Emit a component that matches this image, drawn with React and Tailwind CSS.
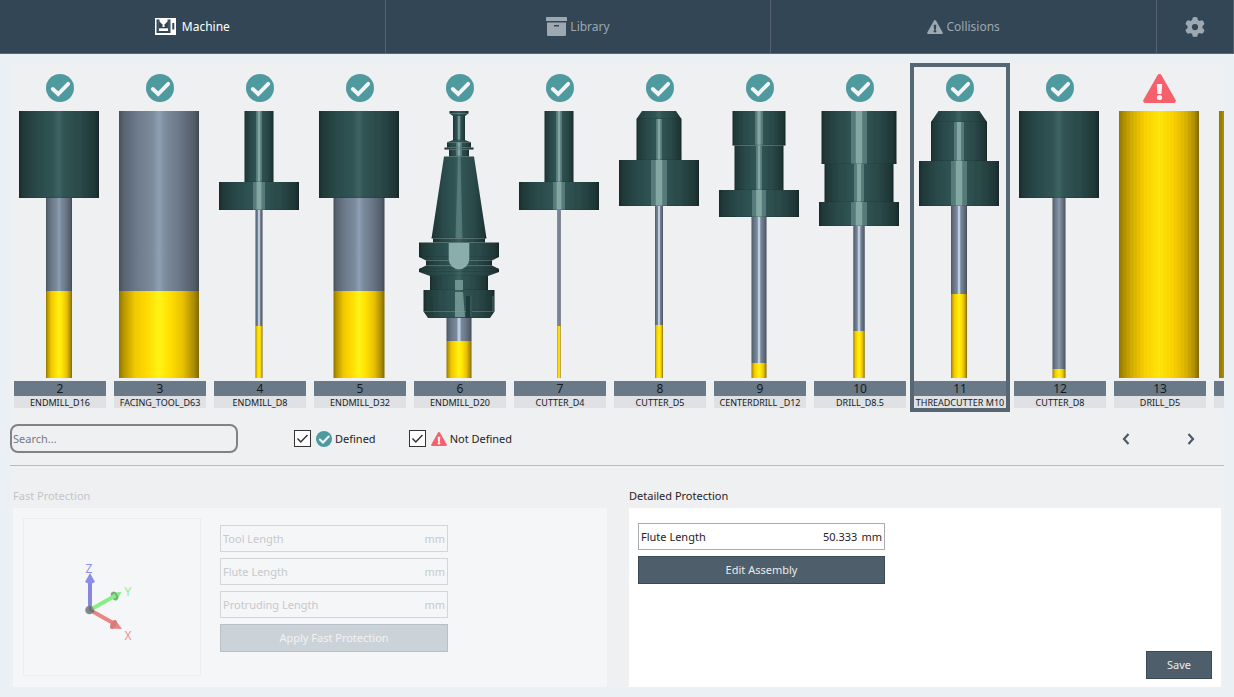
import { useState } from "react";
import { FaGear } from "react-icons/fa6";

const H = "holder";
const S = "shank";
const F = "flute";

const seg = (kind, top, bottom, y0, y1, shine) => ({ kind, top, bottom, y0, y1, shine });
const cyl = (kind, r, y0, y1, shine) => seg(kind, r, r, y0, y1, shine);

const TOOLS = [
  { id: 2, name: "ENDMILL_D16", parts: [cyl(H, 40, 0, 87), cyl(S, 13, 87, 180), cyl(F, 13, 180, 267)] },
  { id: 3, name: "FACING_TOOL_D63", parts: [cyl(S, 40, 0, 180), cyl(F, 40, 180, 267)] },
  { id: 4, name: "ENDMILL_D8", parts: [cyl(H, 14.5, 0, 71, 3), cyl(H, 40, 71, 99, 6), cyl(S, 3.5, 99, 215, 1), cyl(F, 3.5, 215, 267)] },
  { id: 5, name: "ENDMILL_D32", parts: [cyl(H, 40, 0, 87), cyl(S, 25.5, 87, 180), cyl(F, 25.5, 180, 267)] },
  {
    id: 6,
    name: "ENDMILL_D20",
    parts: [
      cyl(H, 9.5, 0, 2.5), seg(H, 9.5, 6, 2.5, 5), cyl(H, 6, 5, 29, 1.5), seg(H, 6, 12, 29, 31.5),
      cyl(H, 12, 31.5, 36.5, 3), cyl(H, 14.5, 36.5, 38.5, 3), cyl(H, 10, 38.5, 45.5, 3),
      seg(H, 15, 27.5, 45.5, 127.5), cyl(H, 26, 127.5, 131.5),
      cyl(H, 40, 131.5, 146), seg(H, 40, 33, 146, 149.5), cyl(H, 33, 149.5, 154.5),
      seg(H, 33, 40, 154.5, 158), cyl(H, 40, 158, 161), seg(H, 40, 29, 161, 165),
      cyl(H, 29, 165, 179), cyl(H, 35.5, 179, 200.5), seg(H, 35.5, 31, 200.5, 207),
      cyl(S, 12.5, 207, 230, 2), cyl(F, 12.5, 230, 267),
    ],
    collet: true,
  },
  { id: 7, name: "CUTTER_D4", parts: [cyl(H, 14.5, 0, 71, 3), cyl(H, 40, 71, 99, 6), cyl(S, 1.7, 99, 215), cyl(F, 1.7, 215, 267)] },
  { id: 8, name: "CUTTER_D5", parts: [seg(H, 17, 22.5, 0, 8), cyl(H, 22.5, 8, 49, 3), cyl(H, 40, 49, 95, 8), cyl(S, 4, 95, 214, 1), cyl(F, 4, 214, 267)] },
  { id: 9, name: "CENTERDRILL _D12", parts: [cyl(H, 26.5, 0, 34.5, 4), cyl(H, 24.5, 34.5, 79, 3), cyl(H, 40, 79, 106, 7), cyl(S, 7.5, 106, 252, 1.5), cyl(F, 7.5, 252, 267)] },
  { id: 10, name: "DRILL_D8.5", parts: [cyl(H, 37.5, 0, 53, 8), cyl(H, 34.5, 53, 91, 5), cyl(H, 40, 91, 115, 8), cyl(S, 5.7, 115, 220, 1.5), cyl(F, 5.7, 220, 267)] },
  { id: 11, name: "THREADCUTTER M10", parts: [seg(H, 20.5, 28, 0, 11), cyl(H, 28, 11, 50, 5), cyl(H, 40, 50, 95, 8), cyl(S, 8, 95, 183, 1.5), cyl(F, 8, 183, 267)] },
  { id: 12, name: "CUTTER_D8", parts: [cyl(H, 40, 0, 87), cyl(S, 6.5, 87, 258), cyl(F, 6.5, 258, 267)] },
  { id: 13, name: "DRILL_D5", parts: [cyl("solid", 40, 0, 267)], undefinedTool: true },
];

const STOPS = {
  holder: [[0, "#182a2a"], [4, "#203838"], [22, "#2a4a4a"], [42, "#305454"], [50, "#3e6462"], [56, "#305454"], [78, "#2a4848"], [96, "#1e3535"], [100, "#152525"]],
  shank: [[0, "#474f5a"], [6, "#596472"], [25, "#6f7d8d"], [42, "#7c8b9d"], [50, "#8fa0b5"], [58, "#7c8b9d"], [75, "#6b7888"], [94, "#535d69"], [100, "#3f4650"]],
  flute: [[0, "#8f7600"], [6, "#b89600"], [20, "#f0c900"], [34, "#ffd900"], [50, "#fff416"], [64, "#ffdf00"], [80, "#e8c000"], [94, "#a88a00"], [100, "#806800"]],
  solid: [[0, "#8f7600"], [6, "#b09000"], [16, "#d4ae00"], [32, "#fad100"], [50, "#ffe60a"], [68, "#fcd200"], [84, "#dab300"], [94, "#b09000"], [100, "#806800"]],
};

function Gradients() {
  return (
    <svg width="0" height="0" className="absolute" aria-hidden="true">
      <defs>
        {Object.entries(STOPS).map(([name, stops]) => (
          <linearGradient key={name} id={name} x1="0" x2="1" y1="0" y2="0">
            {stops.map(([at, color]) => (
              <stop key={at} offset={`${at}%`} stopColor={color} />
            ))}
          </linearGradient>
        ))}
      </defs>
    </svg>
  );
}

function ToolDrawing({ tool }) {
  const c = 45;
  return (
    <svg width="92" height="268" viewBox="0 0 92 268" className="block" aria-hidden="true">
      {tool.parts.map((p, i) => {
        const facets = p.kind === H && p.top >= 20 ? [-0.8, -0.62, -0.42, 0.42, 0.62, 0.8] : [];
        return (
          <g key={i}>
            <path
              d={`M${c - p.top} ${p.y0}H${c + p.top}L${c + p.bottom} ${p.y1}H${c - p.bottom}Z`}
              fill={`url(#${p.kind})`}
            />
            {p.shine && p.kind === H && (
              <>
                <rect x={c - p.shine} y={p.y0} width={p.shine * 2} height={p.y1 - p.y0} fill="#6f9592" opacity=".6" />
                <rect x={c - p.shine / 2.5} y={p.y0} width={p.shine / 1.25} height={p.y1 - p.y0} fill="#8db1ad" opacity=".8" />
              </>
            )}
            {p.shine && p.kind === S && (
              <rect x={c - p.shine / 2 - 0.5} y={p.y0} width={p.shine + 1} height={p.y1 - p.y0} fill="#c6d7ec" opacity=".85" />
            )}
            {facets.map((f) => (
              <path
                key={f}
                d={`M${c + f * p.top} ${p.y0}L${c + f * p.bottom} ${p.y1}`}
                stroke="#14292a"
                strokeWidth=".6"
                opacity=".12"
              />
            ))}
            {p.kind === H && <path d={`M${c - p.bottom} ${p.y1 - 0.5}H${c + p.bottom}`} stroke="#152a2a" opacity=".2" />}
            {p.kind === "solid" &&
              Array.from({ length: 22 }, (_, k) => (
                <path key={k} d={`M${8 + k * 3.5} 0V267`} stroke="#8a7000" strokeWidth=".7" opacity={0.02 + Math.abs(k - 10.5) * 0.012} />
              ))}
          </g>
        );
      })}
      {tool.collet && (
        <g>
          <path d="M44 46h2.500l2 81h-7z" fill="#6d9390" opacity=".5" />
          <path d="M34.700 132h20.600v16a10.300 10.300 0 0 1-20.600 0z" fill="#8aaeab" />
          <path d="M41 169h8v10h-8zM41 181h8l2 25H41z" fill="#80a5a1" opacity=".75" />
          <path d="M52 185h6v22h-6z" fill="#1f3a3a" />
          <path d="M57 185v21M79 185v15" stroke="#4a7471" />
          <path d="M18 185v18" stroke="#193131" opacity=".4" />
        </g>
      )}
    </svg>
  );
}

function CheckBadge({ size }) {
  return (
    <svg width={size} height={size} viewBox="0 0 28 28" className="block shrink-0" aria-hidden="true">
      <circle cx="14" cy="14" r="14" fill="#4f9a9f" />
      <path d="M6.800 15l5.400 5 10-10.200" fill="none" stroke="#f3f4f5" strokeWidth="3.800" strokeLinecap="round" strokeLinejoin="miter" />
    </svg>
  );
}

function WarningBadge({ width, height, fill, mark }) {
  return (
    <svg width={width} height={height} viewBox="0 0 33 29" className="block shrink-0" aria-hidden="true">
      <path d="M14.500 1.200a2.300 2.300 0 0 1 4 0l14 24.600a2.100 2.100 0 0 1-1.900 3.200H2.400a2.100 2.100 0 0 1-1.900-3.200z" fill={fill} />
      <path d="M13.800 10h5.400l-.7 10h-4z" fill={mark} />
      <circle cx="16.500" cy="23.500" r="2.600" fill={mark} />
    </svg>
  );
}

function MachineIcon() {
  return (
    <svg width="21" height="17" viewBox="0 0 21 17" aria-hidden="true">
      <path d="M0 0h21v17H0z" fill="#fff" />
      <path d="M1.500 1.500H15.500V15H1.500z" fill="#334655" />
      <path d="M4.500 1h8v2.500L10 6H9.500v3h-2V6H7L4.500 3.500z" fill="#fff" />
      <path d="M4 10.300h9v2.700H4z" fill="#fff" />
      <path d="M2.800 3h1v10.500h-1zM13.500 3h1v10.500h-1z" fill="#fff" opacity=".15" />
      <path d="M17.300 5h2v6.500h-2z" fill="#334655" />
    </svg>
  );
}

function LibraryIcon() {
  return (
    <svg width="21" height="19" viewBox="0 0 21 19" fill="#9da8b1" aria-hidden="true">
      <path d="M.8 0h19.400q.8 0 .8.8V4H0V.8Q0 0 .8 0z" />
      <path fillRule="evenodd" d="M1 5.500h19v12.300q0 1.200-1.200 1.200H2.200Q1 19 1 17.800zM8 8v1.600h5V8z" />
    </svg>
  );
}

function Header() {
  const tab = "flex min-w-0 flex-1 items-center justify-center border-r border-[#53626e] text-[12px]";
  return (
    <nav className="flex h-[54px] border-b border-[#5c6973] bg-[#334655]">
      <button className={`${tab} gap-[6px] text-white`}>
        <MachineIcon />
        Machine
      </button>
      <button className={`${tab} gap-[3px] text-[#9da8b1]`}>
        <LibraryIcon />
        Library
      </button>
      <button className={`${tab} gap-[3px] text-[#9da8b1]`}>
        <WarningBadge width={16} height={14} fill="#9da8b1" mark="#334655" />
        Collisions
      </button>
      <button aria-label="Settings" className="flex w-[77px] items-center justify-center border-r border-[#53626e] text-[#9da8b1]">
        <FaGear size={20} />
      </button>
    </nav>
  );
}

function ToolCard({ tool, selected, onSelect }) {
  return (
    <button
      onClick={onSelect}
      aria-pressed={selected}
      className={`flex w-[100px] shrink-0 flex-col border-4 ${selected ? "border-[#566673]" : "border-transparent"}`}
    >
      <span className="flex h-[44px] w-full items-center justify-center pr-px pb-[2px]">
        {tool.undefinedTool ? (
          <WarningBadge width={33} height={29} fill="#f4616d" mark="#f3f4f5" />
        ) : (
          <CheckBadge size={28} />
        )}
      </span>
      <ToolDrawing tool={tool} />
      <span className="mt-[2px] block h-[15px] w-full bg-[#697987] text-center text-[12px] leading-[15px] text-[#15191c]">{tool.id}</span>
      <span className="block h-[12px] w-full bg-[#dfe1e4] text-center text-[9px] leading-[14px] whitespace-nowrap text-[#15191c]">{tool.name}</span>
    </button>
  );
}

function NextToolEdge() {
  return (
    <div className="flex w-[100px] shrink-0 flex-col border-4 border-transparent pt-[44px]" aria-hidden="true">
      <ToolDrawing tool={TOOLS[TOOLS.length - 1]} />
      <div className="mt-[2px] h-[15px] bg-[#697987]" />
      <div className="h-[12px] bg-[#dfe1e4]" />
    </div>
  );
}

function FilterBox({ checked, onChange, icon, label }) {
  return (
    <label className="flex items-center gap-[5px]">
      <span className="grid">
        <input
          type="checkbox"
          checked={checked}
          onChange={onChange}
          className="col-start-1 row-start-1 size-[17px] appearance-none border border-[#333] bg-white"
        />
        {checked && (
          <svg width="17" height="17" viewBox="0 0 17 17" className="pointer-events-none col-start-1 row-start-1" aria-hidden="true">
            <path d="M3.500 8.500l3.300 3.500 6.700-7" fill="none" stroke="#333" strokeWidth="1.500" />
          </svg>
        )}
      </span>
      <span className="flex items-center gap-[3px]">
        {icon}
        {label}
      </span>
    </label>
  );
}

function Field({ id, label, value, disabled }) {
  return (
    <div
      className={`flex h-[27px] items-center gap-[4px] border px-[2px] ${
        disabled ? "border-[#d3d6d8] text-[#c6c9cb]" : "border-[#a9abad] text-[#1f2326]"
      }`}
    >
      <label htmlFor={id} className="shrink-0">{label}</label>
      <input
        id={id}
        defaultValue={value}
        disabled={disabled}
        className="min-w-0 flex-1 bg-transparent text-right outline-none"
      />
      <span>mm</span>
    </div>
  );
}

function Axes() {
  return (
    <svg width="176" height="156" viewBox="0 0 176 156" fontSize="12" textAnchor="middle" aria-hidden="true">
      <path d="M97.500 73l-10.500.5 5.500 8.500z" fill="#86ee86" />
      <ellipse cx="90.500" cy="77" rx="3.200" ry="4.600" transform="rotate(-30 90.500 77)" fill="#7fa884" />
      <path d="M66 91L91.500 76.500" stroke="#86ee86" strokeWidth="4" />
      <path d="M66 91L90 104.500" stroke="#e88686" strokeWidth="4" />
      <path d="M98 110l-6.500-9-5.500 8.500z" fill="#e88686" />
      <ellipse cx="89.500" cy="105.500" rx="2.800" ry="4.800" transform="rotate(28 89.500 105.500)" fill="#d97b7b" />
      <path d="M66 91V62" stroke="#8787de" strokeWidth="4" />
      <path d="M66 54l-5 9q5 3.500 10 0z" fill="#8b8bea" />
      <circle cx="65.500" cy="91" r="4.300" fill="#85888b" />
      <path d="M66 87v4l4 2" fill="none" stroke="#6d7073" strokeWidth="2" />
      <text x="65" y="54" fill="#8d8df0">Z</text>
      <text x="104" y="77" fill="#8df08d">Y</text>
      <text x="104" y="121" fill="#f08d8d">X</text>
    </svg>
  );
}

function Chevron({ d }) {
  return (
    <svg width="8" height="12" viewBox="0 0 8 12" aria-hidden="true">
      <path d={d} fill="none" stroke="#4a5a67" strokeWidth="2.200" />
    </svg>
  );
}

export default function App() {
  const [selected, setSelected] = useState(11);
  const [defined, setDefined] = useState(true);
  const [notDefined, setNotDefined] = useState(true);
  const shown = TOOLS.filter((t) => (t.undefinedTool ? notDefined : defined));
  const solidButton = "h-[28px] border border-[#3a4a57] bg-[#4e5e6a] text-[#e9ecee]";

  return (
    <div className="flex min-h-screen flex-col bg-[#ebf0f5] font-['Noto_Sans',sans-serif] text-[11px] leading-[16px] text-[#1f2326]">
      <Gradients />
      <Header />
      <main className="mx-[10px] mt-[9px] mb-[10px] flex flex-1 flex-col bg-[#eff0f2]">
        <section aria-label="Tools" className="flex h-[349px] overflow-hidden">
          {shown.map((tool) => (
            <ToolCard key={tool.id} tool={tool} selected={tool.id === selected} onSelect={() => setSelected(tool.id)} />
          ))}
          {notDefined && <NextToolEdge />}
        </section>

        <div className="flex h-[54px] items-center border-b border-[#b9bbbe]">
          <input
            type="search"
            aria-label="Search"
            placeholder="Search..."
            className="h-[29px] w-[228px] rounded-[8px] border-2 border-[#808284] bg-transparent px-px outline-none placeholder:text-[#77797b]"
          />
          <div className="ml-[56px] flex gap-[33px]">
            <FilterBox checked={defined} onChange={() => setDefined(!defined)} icon={<CheckBadge size={16} />} label="Defined" />
            <FilterBox
              checked={notDefined}
              onChange={() => setNotDefined(!notDefined)}
              icon={<WarningBadge width={16} height={14} fill="#f4616d" mark="#f3f4f5" />}
              label="Not Defined"
            />
          </div>
          <div className="mr-[25px] ml-auto flex">
            <button aria-label="Previous tools" className="flex h-[28px] w-[65px] items-center justify-start pl-[4px]">
              <Chevron d="M6.500 1L2 6l4.500 5" />
            </button>
            <button aria-label="Next tools" className="flex h-[28px] w-[16px] items-center justify-center">
              <Chevron d="M1.500 1L6 6l-4.500 5" />
            </button>
          </div>
        </div>

        <div className="grid flex-1 grid-cols-[594fr_592fr] gap-[22px] px-[3px] pt-[22px]">
          <section className="flex flex-col gap-[4px]">
            <h2 className="text-[#c3c6c8]">Fast Protection</h2>
            <div className="flex flex-1 gap-[19px] bg-[#f5f6f8] p-[10px]">
              <div className="self-start border border-[#eceef0]">
                <Axes />
              </div>
              <form className="flex w-[228px] flex-col gap-[6px] pt-[7px]">
                <Field id="tool-length" label="Tool Length" disabled />
                <Field id="fast-flute-length" label="Flute Length" disabled />
                <Field id="protruding-length" label="Protruding Length" disabled />
                <button type="button" disabled className="h-[28px] border border-[#b7c0c7] bg-[#cbd2d8] text-[#f1f3f5]">
                  Apply Fast Protection
                </button>
              </form>
            </div>
          </section>

          <section className="flex flex-col gap-[4px]">
            <h2>Detailed Protection</h2>
            <div className="flex flex-1 flex-col justify-between bg-white px-[9px] pt-[15px] pb-[8px]">
              <div className="flex w-[247px] flex-col gap-[6px]">
                <Field id="flute-length" label="Flute Length" value="50.333" />
                <button className={solidButton}>Edit Assembly</button>
              </div>
              <button className={`${solidButton} w-[66px] self-end`}>Save</button>
            </div>
          </section>
        </div>
      </main>
    </div>
  );
}
